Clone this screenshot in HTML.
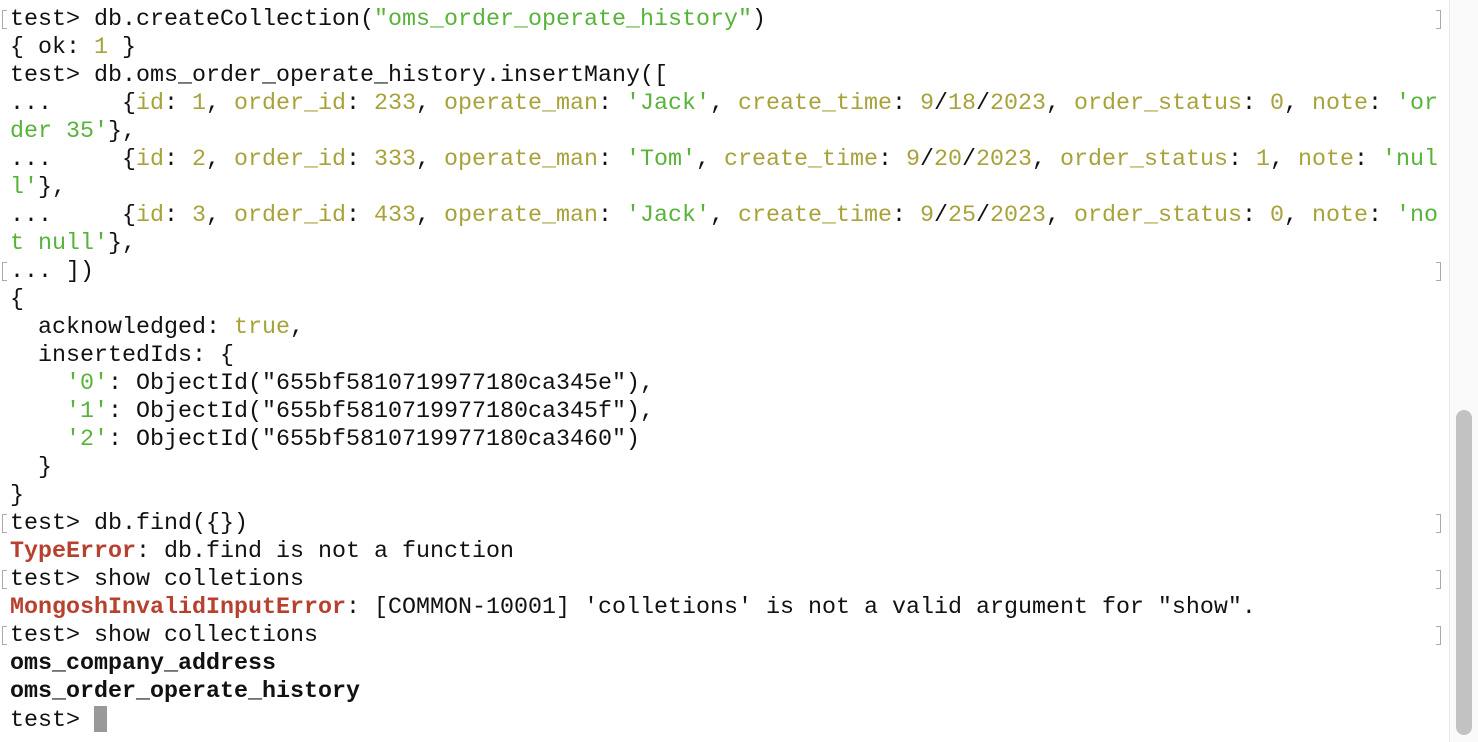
<!DOCTYPE html>
<html><head><meta charset="utf-8"><style>
html,body{margin:0;padding:0;background:#fff;width:1478px;height:742px;overflow:hidden}
.t{position:absolute;left:10px;top:6px;font-family:"Liberation Mono",monospace;font-size:23.33px;line-height:28px;color:#111;white-space:pre;margin:0}
.k{color:#a8a23a}.s{color:#58b33a}.r{color:#b8402e;font-weight:bold}.b{font-weight:bold}
.lb{position:absolute;left:2px;width:4px;height:17px;border:1.5px solid #aaa;border-right:none}
.rb{position:absolute;left:1436px;width:4px;height:17px;border:1.5px solid #aaa;border-left:none}
.track{position:absolute;left:1449px;top:0;width:29px;height:742px;background:#fafafa;border-left:1px solid #e8e8e8}
.thumb{position:absolute;left:1456px;top:410px;width:16px;height:325px;background:#c2c2c2;border-radius:8px}
.cur{display:inline-block;width:13px;height:26px;background:#999;vertical-align:-6px}
</style></head><body>
<div class="track"></div><div class="thumb"></div>
<pre class="t">test&gt; db.createCollection(<span class="s">"oms_order_operate_history"</span>)
{ ok: <span class="k">1</span> }
test&gt; db.oms_order_operate_history.insertMany([
...     {<span class="k">id</span>: <span class="k">1</span>, <span class="k">order_id</span>: <span class="k">233</span>, <span class="k">operate_man</span>: <span class="s">'Jack'</span>, <span class="k">create_time</span>: <span class="k">9</span>/<span class="k">18</span>/<span class="k">2023</span>, <span class="k">order_status</span>: <span class="k">0</span>, <span class="k">note</span>: <span class="s">'or</span>
<span class="s">der 35'</span>},
...     {<span class="k">id</span>: <span class="k">2</span>, <span class="k">order_id</span>: <span class="k">333</span>, <span class="k">operate_man</span>: <span class="s">'Tom'</span>, <span class="k">create_time</span>: <span class="k">9</span>/<span class="k">20</span>/<span class="k">2023</span>, <span class="k">order_status</span>: <span class="k">1</span>, <span class="k">note</span>: <span class="s">'nul</span>
<span class="s">l'</span>},
...     {<span class="k">id</span>: <span class="k">3</span>, <span class="k">order_id</span>: <span class="k">433</span>, <span class="k">operate_man</span>: <span class="s">'Jack'</span>, <span class="k">create_time</span>: <span class="k">9</span>/<span class="k">25</span>/<span class="k">2023</span>, <span class="k">order_status</span>: <span class="k">0</span>, <span class="k">note</span>: <span class="s">'no</span>
<span class="s">t null'</span>},
... ])
{
  acknowledged: <span class="k">true</span>,
  insertedIds: {
    <span class="s">'0'</span>: ObjectId("655bf5810719977180ca345e"),
    <span class="s">'1'</span>: ObjectId("655bf5810719977180ca345f"),
    <span class="s">'2'</span>: ObjectId("655bf5810719977180ca3460")
  }
}
test&gt; db.find({})
<span class="r">TypeError</span>: db.find is not a function
test&gt; show colletions
<span class="r">MongoshInvalidInputError</span>: [COMMON-10001] 'colletions' is not a valid argument for "show".
test&gt; show collections
<span class="b">oms_company_address</span>
<span class="b">oms_order_operate_history</span>
test&gt; <span class="cur"></span></pre>
<div class="lb" style="top:10px"></div><div class="rb" style="top:10px"></div>
<div class="lb" style="top:262px"></div><div class="rb" style="top:262px"></div>
<div class="lb" style="top:514px"></div><div class="rb" style="top:514px"></div>
<div class="lb" style="top:570px"></div><div class="rb" style="top:570px"></div>
<div class="lb" style="top:626px"></div><div class="rb" style="top:626px"></div>
</body></html>
